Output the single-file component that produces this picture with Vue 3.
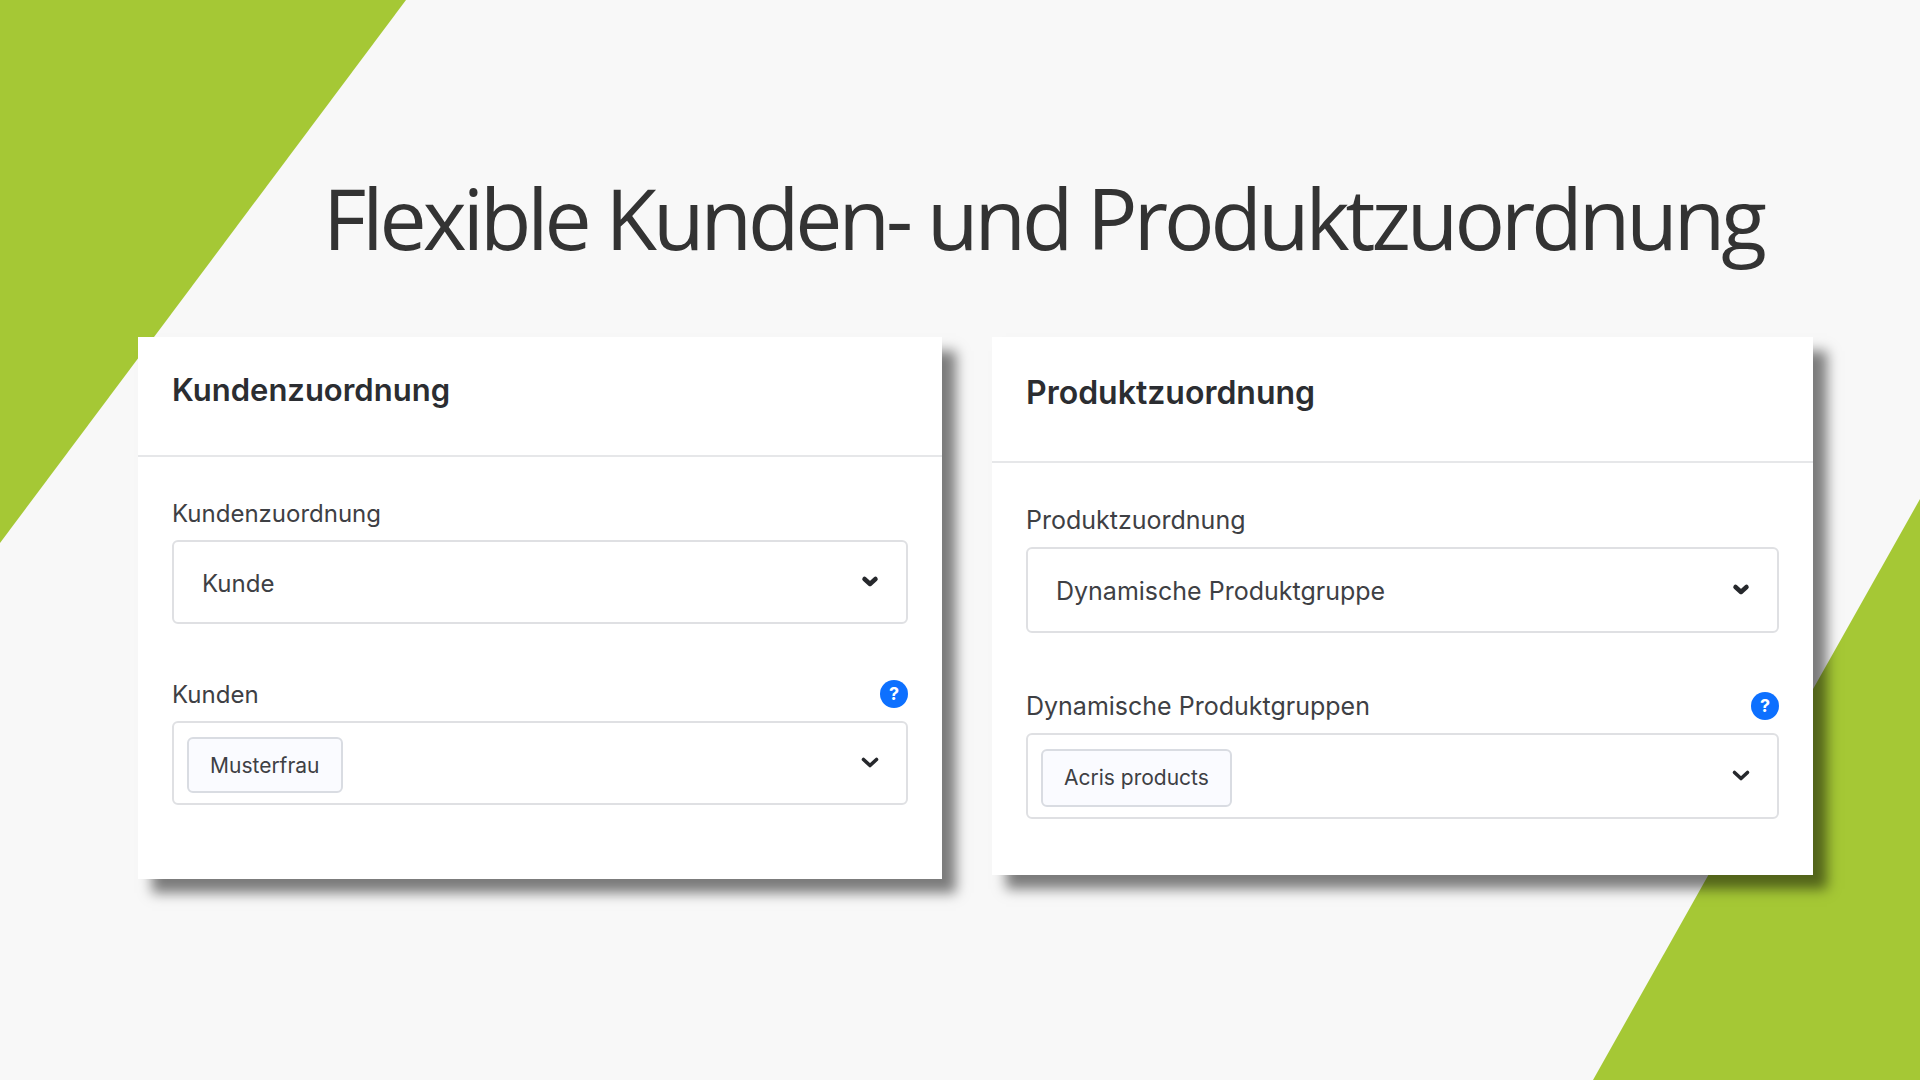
<script setup>
const panels = [
  {
    id: 'kunden',
    title: 'Kundenzuordnung',
    typeLabel: 'Kundenzuordnung',
    typeValue: 'Kunde',
    itemsLabel: 'Kunden',
    items: ['Musterfrau'],
  },
  {
    id: 'produkte',
    title: 'Produktzuordnung',
    typeLabel: 'Produktzuordnung',
    typeValue: 'Dynamische Produktgruppe',
    itemsLabel: 'Dynamische Produktgruppen',
    items: ['Acris products'],
  },
]
</script>

<template>
  <main class="slide">
    <div class="shape shape-top" aria-hidden="true"></div>
    <div class="shape shape-bottom" aria-hidden="true"></div>

    <h1 class="headline">Flexible Kunden- und Produktzuordnung</h1>

    <div class="panels">
      <section v-for="panel in panels" :key="panel.id" class="panel" :class="`panel-${panel.id}`">
        <header class="panel-header">
          <h2 class="panel-title">{{ panel.title }}</h2>
        </header>

        <div class="panel-body">
          <div class="field">
            <div class="label-row">
              <label :for="`${panel.id}-type`">{{ panel.typeLabel }}</label>
            </div>
            <div class="select-wrap">
              <select :id="`${panel.id}-type`" class="select">
                <option>{{ panel.typeValue }}</option>
              </select>
              <svg class="chevron" viewBox="0 0 20 20" aria-hidden="true">
                <path d="M4.500 7 L10 12 L15.500 7" stroke-width="4.500" />
              </svg>
            </div>
          </div>

          <div class="field">
            <div class="label-row">
              <label :for="`${panel.id}-items`">{{ panel.itemsLabel }}</label>
              <button type="button" class="help" aria-label="Hilfe">?</button>
            </div>
            <div class="multi">
              <span v-for="item in panel.items" :key="item" class="chip">{{ item }}</span>
              <input :id="`${panel.id}-items`" class="multi-input" type="text" />
              <button type="button" class="toggle" aria-label="Auswahl öffnen">
                <svg class="chevron" viewBox="0 0 20 20" aria-hidden="true">
                  <path d="M3.500 6.500 L10 12.500 L16.500 6.500" stroke-width="3.600" />
                </svg>
              </button>
            </div>
          </div>
        </div>
      </section>
    </div>
  </main>
</template>

<style>
body {
  margin: 0;
  background: #f8f8f8;
}
</style>

<style scoped>
.slide {
  position: relative;
  box-sizing: border-box;
  min-height: 100vh;
  padding: 158px 107px 160px 138px;
  overflow: hidden;
  background: #f8f8f8;
  color: #2b2d31;
  font-family: Inter, "Liberation Sans", sans-serif;
}

.shape {
  position: absolute;
  background: #a5c835;
}

.shape-top {
  top: 0;
  left: 0;
  width: 406px;
  height: 543px;
  clip-path: polygon(0 0, 100% 0, 0 100%);
}

.shape-bottom {
  right: 0;
  bottom: 0;
  width: 327px;
  height: 581px;
  clip-path: polygon(100% 0, 100% 100%, 0 100%);
}

.headline {
  position: relative;
  margin: 0 0 59px 185px;
  color: #333;
  font-family: "Open Sans", "Noto Sans", sans-serif;
  font-size: 84px;
  font-weight: 400;
  line-height: 120px;
  letter-spacing: -4px;
  white-space: nowrap;
}

.panels {
  position: relative;
  display: grid;
  grid-template-columns: minmax(0, 804fr) minmax(0, 821fr);
  align-items: start;
  gap: 50px;
}

.panel {
  --text: 24px;
  --control: 84px;
  --chip: 56px;
  --title: 31px;
  --header: 120px;
  --field-gap: 53px;
  --body-top: 39px;
  --body-bottom: 74px;
  background: #fff;
  box-shadow: 14px 14px 12px rgba(0, 0, 0, 0.5);
}

.panel-produkte {
  --text: 25px;
  --control: 86px;
  --chip: 58px;
  --title: 32px;
  --header: 126px;
  --field-gap: 56px;
  --body-top: 40px;
  --body-bottom: 56px;
}

.panel-header {
  display: flex;
  align-items: center;
  box-sizing: border-box;
  height: var(--header);
  padding: 0 34px 12px;
  border-bottom: 2px solid #e6e7e9;
}

.panel-title {
  margin: 0;
  font-size: var(--title);
  font-weight: 600;
  line-height: 40px;
}

.panel-body {
  display: flex;
  flex-direction: column;
  gap: var(--field-gap);
  padding: var(--body-top) 34px var(--body-bottom);
}

.field {
  display: flex;
  flex-direction: column;
  gap: 10px;
}

.label-row {
  display: flex;
  align-items: center;
  justify-content: space-between;
  height: 34px;
  color: #3e4044;
  font-size: var(--text);
}

.help {
  width: 28px;
  height: 28px;
  padding: 0;
  border: 0;
  border-radius: 50%;
  background: #0d70ff;
  color: #fff;
  font: 700 18px/28px Inter, sans-serif;
}

.select-wrap {
  display: grid;
  align-items: center;
}

.select {
  grid-area: 1 / 1;
  box-sizing: border-box;
  width: 100%;
  height: var(--control);
  padding: 2px 64px 0 28px;
  appearance: none;
  border: 2px solid #dfe0e3;
  border-radius: 6px;
  background: #fff;
  color: #3e4044;
  font-family: inherit;
  font-size: var(--text);
}

.chevron {
  width: 20px;
  height: 20px;
  fill: none;
  stroke: #26282c;
  stroke-linecap: round;
  stroke-linejoin: round;
}

.select-wrap .chevron {
  grid-area: 1 / 1;
  justify-self: end;
  margin-right: 28px;
  pointer-events: none;
}

.multi {
  display: flex;
  align-items: center;
  box-sizing: border-box;
  height: var(--control);
  padding: 0 26px 0 13px;
  border: 2px solid #dfe0e3;
  border-radius: 6px;
  background: #fff;
}

.chip {
  box-sizing: border-box;
  height: var(--chip);
  margin-top: 4px;
  padding: 0 21px;
  border: 2px solid #d9dce2;
  border-radius: 6px;
  background: #fafbff;
  color: #3e4044;
  font-size: 21px;
  line-height: 54px;
  white-space: nowrap;
}

.multi-input {
  flex: 1;
  min-width: 0;
  border: 0;
  outline: 0;
  background: transparent;
  font: inherit;
}

.toggle {
  display: flex;
  padding: 0;
  border: 0;
  background: transparent;
}
</style>
